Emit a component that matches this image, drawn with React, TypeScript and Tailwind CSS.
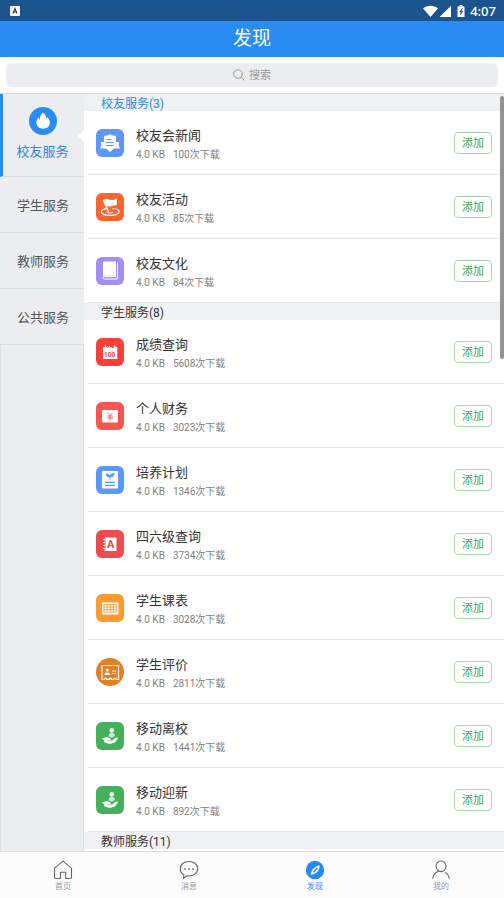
import type { ReactNode } from "react";

type Service = { name: string; downloads: number; color: string; round?: boolean; art: ReactNode };
type Group = { title: string; active?: boolean; items: Service[] };

const handArt = (
  <>
    <circle cx="15.7" cy="8.2" r="2.3" fill="#fff" />
    <path d="M12.600 14.600c0-2.800 1.200-3.900 3.100-3.900s3.300 1 3.300 3.400l-2.600 1.500c-1.200 0-2.400-.6-3.800-1z" fill="#fff" opacity=".75" />
    <path d="M5.800 16.200l4-1c1.600-.2 2.600.4 3.800.8 1.400.3 1.600 1.500.4 1.900 1.800.3 3.200-.4 4.500-1.500 1.200-1 3.300-1 3.500-.3-.6 1.600-2.300 4-4.200 4.900-2.300.9-5.200.7-7.800.3l-2.200-1.500 1-.9z" fill="#fff" />
    <path d="M11.500 18.400c2 .8 4.200.7 6-.4" fill="none" stroke="#45b05b" strokeWidth=".6" />
  </>
);

const groups: Group[] = [
  {
    title: "校友服务(3)",
    active: true,
    items: [
      {
        name: "校友会新闻",
        downloads: 100,
        color: "bg-[#5f97f8]",
        art: (
          <>
            <path d="M5 13h4v6.500H4l1.200-3zM23 13h-4v6.500h5l-1.200-3z" fill="#fff" opacity=".9" />
            <path d="M8 6.800c2.300 0 4-.4 6-1.500 2 1.100 3.700 1.500 6 1.500v12c-2.600 1.200-4.500 2.200-6 4.400-1.500-2.200-3.400-3.200-6-4.400z" fill="#fff" />
            <path d="M10.500 10.500h5M9.500 13.500h8M9.500 16.500h8" stroke="#5f97f8" strokeWidth="1" />
          </>
        ),
      },
      {
        name: "校友活动",
        downloads: 85,
        color: "bg-[#fb6530]",
        art: (
          <>
            <path d="M7 7c2.500-1.700 4.500-1 6.700-.3 2.400.9 5-.6 7.800-1.300-.8 2-.6 4.500-.8 7-2.500-.8-4.400.8-6.500 1-1.500.2-2.700 0-3.800-.4z" fill="#fff" />
            <path d="M7.300 7l5.500 12.300" stroke="#fff" strokeWidth="1.300" />
            <path d="M11 15.600c-3.500.4-5.700 1.600-5.700 3.200 0 2.100 3.900 3.600 8.900 3.600s9-1.600 9-3.700c0-1.700-2.500-2.900-6.700-3.200" fill="none" stroke="#fff" strokeWidth="1.200" />
            <path d="M10.500 18.500c-.2 1.300 4 2 6.500.7" fill="none" stroke="#fff" strokeWidth="1" />
          </>
        ),
      },
      {
        name: "校友文化",
        downloads: 84,
        color: "bg-[#a58df6]",
        art: (
          <>
            <path d="M7 4.500h13v14.200H8.700c-1.200 0-1.700.6-1.700 1.300z" fill="#fff" />
            <path d="M21.500 5.500v16.500H8.500c-2 0-2-2.500 0-2.500h11.500" fill="none" stroke="#fff" strokeWidth="1" />
          </>
        ),
      },
    ],
  },
  {
    title: "学生服务(8)",
    items: [
      {
        name: "成绩查询",
        downloads: 5608,
        color: "bg-[#fa4039]",
        art: (
          <>
            <path d="M7 9h3l1 1.500L12.500 9h3l1 1.500L18 9h3.300v12H7z" fill="#fff" />
            <path d="M9 7l1 2.500 2-1M18.500 7l1 2.500-2-1M13 8l1.500 1.500" fill="none" stroke="#fff" strokeWidth="1" />
            <text x="13.600" y="18.700" textAnchor="middle" fontSize="6.500" fontWeight="700" fill="#fa4039">100</text>
          </>
        ),
      },
      {
        name: "个人财务",
        downloads: 3023,
        color: "bg-[#fa554e]",
        art: (
          <>
            <rect x="6" y="8" width="16" height="12.500" rx="1" fill="#fff" />
            <path d="M11.500 10.500l2.600 3 2.700-3M11.300 14h5.500M11.300 16h5.500M14.100 13.500v5" fill="none" stroke="#fa554e" strokeWidth=".9" />
          </>
        ),
      },
      {
        name: "培养计划",
        downloads: 1346,
        color: "bg-[#5b98f8]",
        art: (
          <>
            <rect x="6" y="5" width="16" height="17.500" rx="1" fill="#fff" />
            <path d="M14 13.500v-4M14 11c-2.500 0-3.800-1-4-3 2 0 3.700.7 4 2.500.3-2 1.600-3 4.200-3 0 2.300-1.500 3.500-4.200 3.500z" fill="#5b98f8" stroke="#5b98f8" strokeWidth=".9" />
            <path d="M9 16.300h10M9 19.300h10" stroke="#5b98f8" strokeWidth="1.200" />
          </>
        ),
      },
      {
        name: "四六级查询",
        downloads: 3734,
        color: "bg-[#ef4a4d]",
        art: (
          <>
            <rect x="8.500" y="7.500" width="12" height="13.500" fill="#fff" />
            <path d="M7 9.500h3M7 12.500h3M7 15.500h3M7 18.500h3" stroke="#ef4a4d" strokeWidth="2.200" />
            <path d="M7 9.500h2.500M7 12.500h2.500M7 15.500h2.500M7 18.500h2.500" stroke="#fff" strokeWidth="1" />
            <text x="14.800" y="18.200" textAnchor="middle" fontSize="11" fontWeight="700" fill="#ef4a4d">A</text>
          </>
        ),
      },
      {
        name: "学生课表",
        downloads: 3028,
        color: "bg-[#fd9b33]",
        art: (
          <>
            <rect x="6" y="8.500" width="16.500" height="12" fill="#fff" />
            <path d="M7.500 10.500h13.500M7.500 13h13.500M7.500 15.500h13.500M7.500 18h13.500M8 10.500v8M11.200 10.500v8M14.400 10.500v8M17.600 10.500v8M20.800 10.500v8" stroke="#fd9b33" strokeWidth=".8" />
          </>
        ),
      },
      {
        name: "学生评价",
        downloads: 2811,
        color: "bg-[#e57f26]",
        round: true,
        art: (
          <>
            <path d="M6 7.500h16.500v14h-2.500c0-1.800-2.300-1.800-2.300 0h-2.300c0-1.800-2.300-1.800-2.300 0h-2.300c0-1.800-2.300-1.800-2.300 0H6z" fill="none" stroke="#fff" strokeWidth="1.200" />
            <circle cx="11.300" cy="12" r="1.600" fill="#fff" />
            <path d="M8.500 17c0-3.200 5.800-3.200 5.800 0z" fill="#fff" />
            <path d="M16 13h4M16 15.500h4" stroke="#fff" strokeWidth=".9" />
          </>
        ),
      },
      { name: "移动离校", downloads: 1441, color: "bg-[#45b05b]", art: handArt },
      { name: "移动迎新", downloads: 892, color: "bg-[#45b05b]", art: handArt },
    ],
  },
  { title: "教师服务(11)", items: [] },
];

const tabs: { label: string; active?: boolean; art: ReactNode }[] = [
  {
    label: "首页",
    art: <path d="M1.500 8.200L10 1.200l8.500 7v9.100c0 .8-.4 1.200-1.200 1.200h-4.600v-6.300H7.400v6.300H2.700c-.8 0-1.200-.4-1.200-1.200z" />,
  },
  {
    label: "消息",
    art: (
      <>
        <path d="M10 1.500c5 0 8.700 3 8.700 7.200s-3.700 7.300-8.700 7.300c-.8 0-1.500 0-2.200-.2L4.600 18.300l.2-3.500C2.600 13.500 1.300 11.300 1.300 8.700c0-4.200 3.700-7.200 8.700-7.200z" />
        <path d="M5.300 9h1.600M9.300 9h1.600M13.300 9h1.600" strokeWidth="1.700" />
      </>
    ),
  },
  {
    label: "发现",
    active: true,
    art: (
      <>
        <circle cx="10" cy="10" r="9.200" fill="#2a89ef" stroke="none" />
        <path d="M14.600 5.200c.2 2.600-.8 5-2.400 6.800-1.700 1.500-3.800 2.400-6.400 3 .3-2.600 1.200-4.700 2.700-6.400 1.700-1.800 3.600-2.900 6.100-3.400z" fill="#fff" stroke="none" />
        <path d="M12.300 7.800L8.700 12.300" stroke="#2a89ef" strokeWidth="1.500" />
      </>
    ),
  },
  {
    label: "我的",
    art: (
      <>
        <ellipse cx="10" cy="6.300" rx="5" ry="5.300" />
        <path d="M7.500 11.200C4 12.500 2 15 1.800 18.800M14 12.500c2.700 1.300 4 3.500 4.300 6.300" />
      </>
    ),
  },
];

function ServiceRow({ name, downloads, color, round, art }: Service) {
  return (
    <li className="ml-1 flex h-16 items-center border-b border-[#e4e5e7] pl-2 pr-3">
      <span className={`size-7 shrink-0 overflow-hidden ${round ? "rounded-full" : "rounded-md"} ${color}`}>
        <svg viewBox="0 0 28 28" className="size-7" aria-hidden="true">{art}</svg>
      </span>
      <div className="ml-3 min-w-0 flex-1 pt-1">
        <h3 className="text-[13px] leading-5 text-[#333]">{name}</h3>
        <p className="flex gap-2 text-[10px] leading-[18px] text-[#808080]">
          <span>4.0 KB</span>
          <span>{downloads}次下载</span>
        </p>
      </div>
      <button type="button" className="h-[22px] w-[38px] rounded border border-[#a5d6a7] pt-px text-[11px] leading-5 text-[#43a547]">
        添加
      </button>
    </li>
  );
}

export default function App() {
  return (
    <div className="flex min-h-screen flex-col bg-white font-[Roboto,'Noto_Sans_CJK_SC',sans-serif]">
      <div className="flex h-[21px] items-center bg-[#1c548f] pl-2.5 pr-2 text-white">
        <svg viewBox="0 0 10 10" className="size-2.5" aria-hidden="true">
          <rect width="10" height="10" rx="1" fill="#fff" />
          <path d="M3 7.500L5 2.500l2 5M3.800 6h2.400" fill="none" stroke="#263f5c" strokeWidth="1.200" />
        </svg>
        <svg viewBox="0 0 43 12" className="ml-auto h-3 w-[43px]" fill="#fff" aria-hidden="true">
          <path d="M0 3.500C4-.3 11-.3 15 3.500L7.500 12zM16.500 12L28 .8V12z" />
          <path d="M34.500 1.500h2V0h3v1.500h2V12h-7z" />
          <path d="M39.500 3L36.500 7h1.700l-.8 3 2.600-4h-1.600z" fill="#1c548f" stroke="#1c548f" strokeWidth=".4" />
        </svg>
        <span className="ml-1 font-['Noto_Sans',sans-serif] text-[13px] font-medium leading-5">4:07</span>
      </div>
      <header className="flex h-9 items-center justify-center bg-[#2a8cf2]">
        <h1 className="text-[19px] leading-8 text-white">发现</h1>
      </header>
      <div className="border-b border-[#d9dadc] px-1.5 py-1.5">
        <label className="flex h-6 items-center justify-center gap-1 rounded-[5px] bg-[#ecedf0]">
          <svg viewBox="0 0 12 12" className="size-3" fill="none" stroke="#999" aria-hidden="true">
            <circle cx="5" cy="5" r="4.300" />
            <path d="M8.200 8.200l3.200 3.200" />
          </svg>
          <input
            type="text"
            aria-label="搜索"
            placeholder="搜索"
            className="field-sizing-content bg-transparent pt-0.5 text-[11px] leading-5 text-[#333] outline-none placeholder:text-[#999]"
          />
        </label>
      </div>

      <div className="relative flex flex-1">
        <nav className="flex w-[84px] shrink-0 flex-col bg-[#ecedf0] text-[13px] text-[#555]">
          <button type="button" className="relative flex h-[83px] flex-col items-center border-b border-l-3 border-b-[#dcdde0] border-l-[#2a8cf2] pr-0.5 pt-[13px] text-[#3386e4]">
            <svg viewBox="0 0 28 28" className="size-7" aria-hidden="true">
              <circle cx="14" cy="14" r="14" fill="#2a8cf2" />
              <path d="M13.800 5.500c2.500 1.500 3.500 4 3.300 6.200.8-.5 1-1.200 1-2 2 2 3 4.200 2.700 6.800-.4 3.300-3 5.200-6.600 5.200-4 0-6.600-2.200-6.800-5.600-.1-2.400 1-4 2.300-6 .1 1.500.4 2.200 1.100 2.700 0-2.700.8-5.600 3-7.300z" fill="#fff" />
            </svg>
            <span className="mt-[7px] leading-5">校友服务</span>
            <span className="absolute right-0 top-9 size-0 border-y-6 border-r-6 border-y-transparent border-r-white" />
          </button>
          {["学生服务", "教师服务", "公共服务"].map((label) => (
            <button key={label} type="button" className="h-14 border-b border-[#dcdde0] pl-0.5 pt-0.5">
              {label}
            </button>
          ))}
          <div className="flex-1 border-x border-[#dcdde0]" />
        </nav>

        <main className="min-w-0 flex-1 pb-0.5">
          {groups.map((g) => (
            <section key={g.title}>
              <h2 className={`h-[17px] bg-[#f0f1f3] pl-[17px] text-[12px] leading-5 ${g.active ? "text-[#3386e4]" : "text-[#333]"}`}>
                {g.title}
              </h2>
              <ul>
                {g.items.map((s) => (
                  <ServiceRow key={s.name} {...s} />
                ))}
              </ul>
            </section>
          ))}
        </main>
        <span className="absolute right-0 top-0.5 h-[263px] w-1 rounded-full bg-[#929292]" />
      </div>

      <nav className="flex h-[47px] border-t border-[#dcdde0] bg-[#fcfcfc]">
        {tabs.map((t) => (
          <button key={t.label} type="button" className={`flex flex-1 flex-col items-center pt-2 text-[8px] leading-3 ${t.active ? "text-[#2a89ef]" : "text-[#999]"}`}>
            <svg viewBox="0 0 20 20" className="size-5" fill="none" stroke="#666" strokeWidth="1.100" aria-hidden="true">{t.art}</svg>
            <span className="mt-px">{t.label}</span>
          </button>
        ))}
      </nav>
    </div>
  );
}
